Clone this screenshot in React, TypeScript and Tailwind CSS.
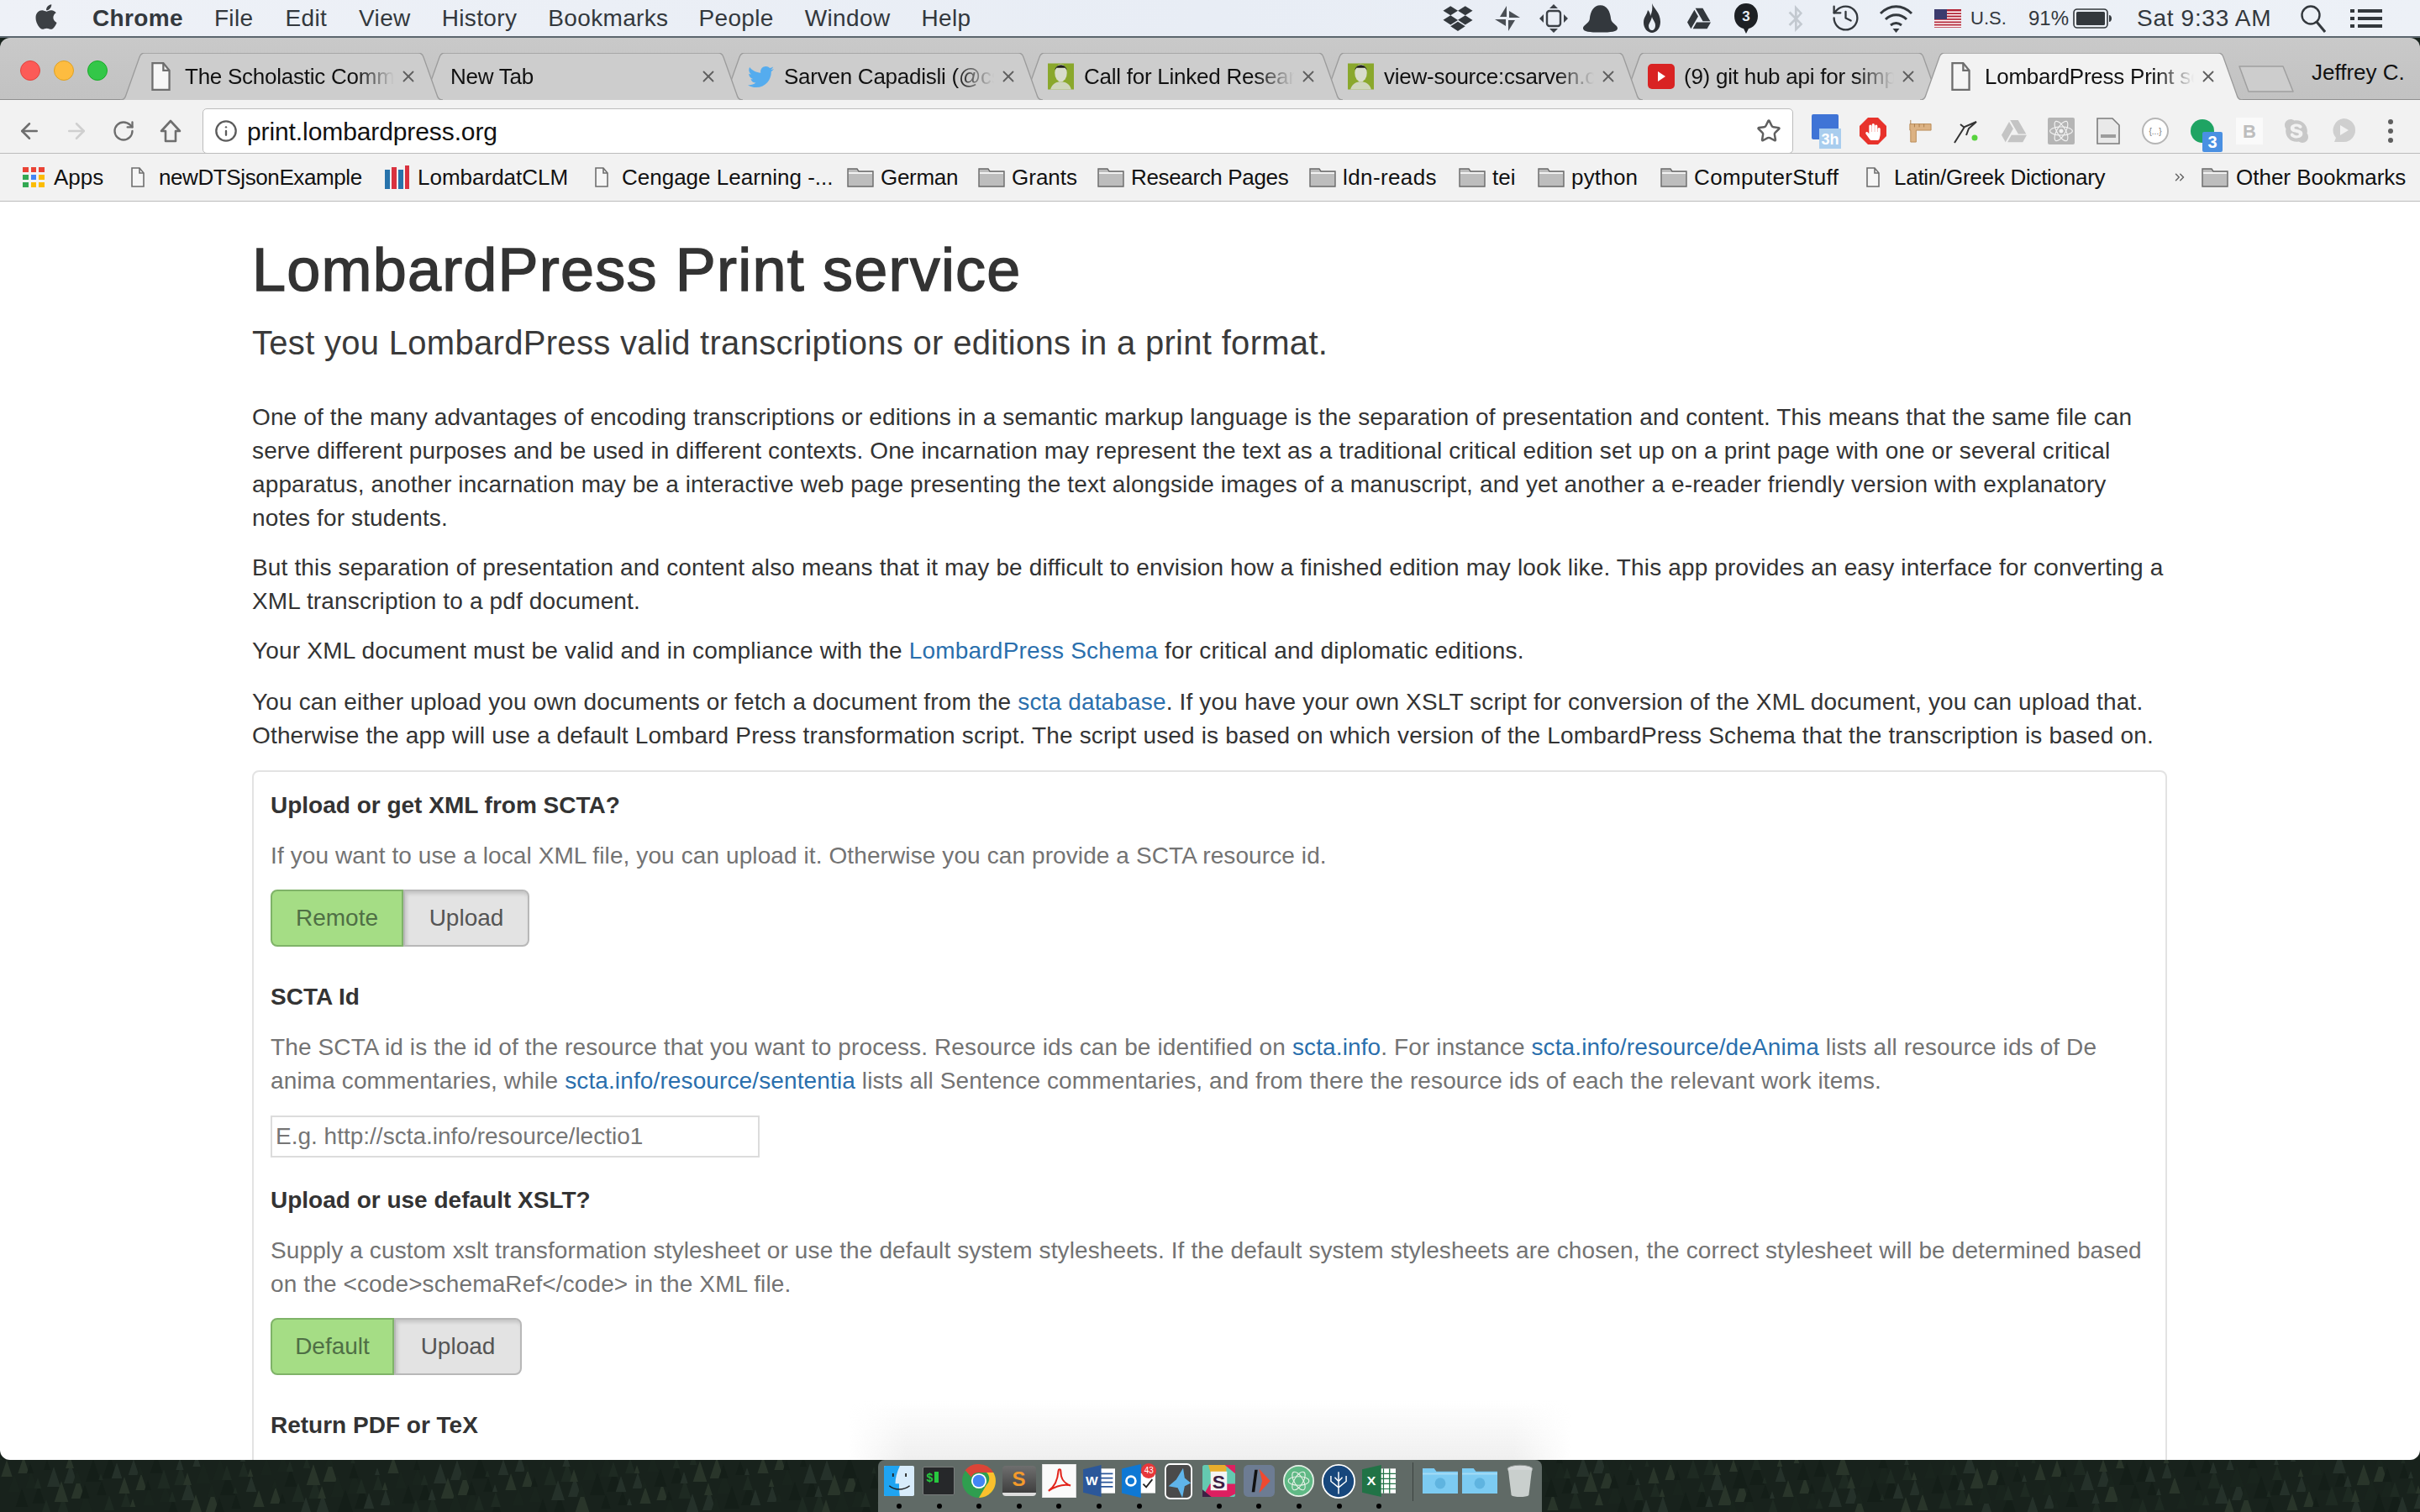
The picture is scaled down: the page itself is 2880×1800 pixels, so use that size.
import { ArrowLeft, ArrowRight, RotateCw, Info, Star, X, ChevronsRight, History } from "lucide-react";
import { FaApple, FaDropbox, FaGoogleDrive, FaBluetoothB, FaTwitter, FaReact, FaSkype, FaHandPaper } from "react-icons/fa";

const DocIcon = ({ className = "w-[23px] h-[36px]" }: { className?: string }) => (
    <svg viewBox="0 0 16 24" className={className} fill="none" stroke="#6e6e6e" strokeWidth="1.6">
        <path d="M1 1h9l5 6v16H1z" fill="#f6f6f6" />
        <path d="M10 1v6h5" />
    </svg>
);

const Folder = () => (
    <svg viewBox="0 0 32 24" className="w-[32px] h-[24px] shrink-0">
        <path d="M1 23V2h11l2 3h17v18z" fill="#bdbdbd" stroke="#6a6a6a" strokeWidth="1.4" />
        <path d="M2 7h28" stroke="#f2f2f2" strokeWidth="2" />
    </svg>
);

const Avatar = () => (
    <svg viewBox="0 0 30 30" className="w-[31px] h-[32px] shrink-0">
        <rect width="30" height="30" fill="#8aa82c" />
        <ellipse cx="15" cy="11" rx="7" ry="10" fill="#d8dccb" />
        <path d="M8 8c1-8 13-8 14 0l-2-3H10z" fill="#1e1e1a" />
        <path d="M3 30c2-7 7-9 12-9s10 2 12 9z" fill="#cfd6bd" />
    </svg>
);

const tabs = [
    { title: "The Scholastic Comm", icon: "doc", wrap: "relative w-[384px] h-[56px] mr-[-27px] shrink-0 z-[7]" },
    { title: "New Tab", icon: "none", wrap: "relative w-[384px] h-[56px] mr-[-27px] shrink-0 z-[6]" },
    { title: "Sarven Capadisli (@csarven)", icon: "twitter", wrap: "relative w-[384px] h-[56px] mr-[-27px] shrink-0 z-[5]" },
    { title: "Call for Linked Research", icon: "avatar", wrap: "relative w-[384px] h-[56px] mr-[-27px] shrink-0 z-[4]" },
    { title: "view-source:csarven.ca", icon: "avatar", wrap: "relative w-[384px] h-[56px] mr-[-27px] shrink-0 z-[3]" },
    { title: "(9) git hub api for simple", icon: "youtube", wrap: "relative w-[384px] h-[56px] mr-[-27px] shrink-0 z-[2]" },
    { title: "LombardPress Print service", icon: "doc", active: true, wrap: "relative w-[384px] h-[56px] mr-[-27px] shrink-0 z-[8]" },
];

const TabIcon = ({ icon }: { icon: string }) => {
    if (icon === "doc") return <div className="w-[44px] pl-[4px] shrink-0"><DocIcon /></div>;
    if (icon === "twitter") return <div className="w-[43px] shrink-0"><FaTwitter className="w-[31px] h-[31px] text-[#55acee]" /></div>;
    if (icon === "avatar") return <div className="w-[43px] shrink-0"><Avatar /></div>;
    if (icon === "youtube")
        return (
            <div className="w-[43px] shrink-0">
                <svg viewBox="0 0 32 32" className="w-[32px] h-[32px]">
                    <rect y="1" width="32" height="30" rx="5" fill="#d92323" />
                    <path d="M12 10l9 6-9 6z" fill="#fff" />
                </svg>
            </div>
        );
    return <div className="w-[3px] shrink-0" />;
};

const Tab = ({ tab }: { tab: (typeof tabs)[number] }) => (
    <div className={tab.wrap}>
        <svg viewBox="0 0 384 56" className="absolute inset-0 w-full h-full">
            <path
                d="M0 56C4 56 6 54 7 50L23 5C24 2 26 0 29 0H355C358 0 360 2 361 5L377 50C378 54 380 56 384 56"
                fill={tab.active ? "#f2f2f2" : "#cdcdcd"}
                stroke="#9b9b9b"
                strokeWidth="1.3"
            />
        </svg>
        <div className="relative flex items-center h-full pl-[33px] pr-[30px]">
            <TabIcon icon={tab.icon} />
            <div className="flex-1 min-w-0 overflow-hidden whitespace-nowrap text-[26px] tracking-[-0.25px] leading-[56px] text-[#111] [mask-image:linear-gradient(to_right,#000_82%,transparent_100%)]">
                {tab.title}
            </div>
            <X className="w-[22px] h-[22px] ml-[6px] text-[#5f5f5f] shrink-0" strokeWidth={2} />
        </div>
    </div>
);

const bookmarks = [
    { label: "newDTSjsonExample", kind: "doc", wrap: "flex items-center gap-[17px] w-[301px] shrink-0 tracking-[-0.4px]" },
    { label: "LombardatCLM", kind: "iiif", wrap: "flex items-center gap-[9px] w-[251px] shrink-0" },
    { label: "Cengage Learning -...", kind: "doc", wrap: "flex items-center gap-[16px] w-[300px] shrink-0" },
    { label: "German", kind: "folder", wrap: "flex items-center gap-[8px] w-[156px] shrink-0 tracking-[-0.3px]" },
    { label: "Grants", kind: "folder", wrap: "flex items-center gap-[8px] w-[142px] shrink-0" },
    { label: "Research Pages", kind: "folder", wrap: "flex items-center gap-[8px] w-[252px] shrink-0 tracking-[-0.35px]" },
    { label: "ldn-reads", kind: "folder", wrap: "flex items-center gap-[8px] w-[178px] shrink-0 tracking-[0.4px]" },
    { label: "tei", kind: "folder", wrap: "flex items-center gap-[8px] w-[94px] shrink-0" },
    { label: "python", kind: "folder", wrap: "flex items-center gap-[8px] w-[146px] shrink-0 tracking-[0.2px]" },
    { label: "ComputerStuff", kind: "folder", wrap: "flex items-center gap-[8px] w-[245px] shrink-0 tracking-[0.4px]" },
    { label: "Latin/Greek Dictionary", kind: "doc", wrap: "flex items-center gap-[17px] w-[364px] shrink-0 tracking-[-0.27px]" },
];

const MenuBar = () => (
    <div className="h-[45px] flex items-center shrink-0 bg-gradient-to-r from-[#eef1f7] via-[#e8edf5] to-[#edf1f7] border-b-2 border-[#5c666e] text-[28px] text-[#33383d]">
        <FaApple className="w-[30px] h-[34px] ml-[40px] mr-[40px] mb-[4px] text-[#3c4044]" />
        <div className="flex tracking-[0.35px] whitespace-nowrap">
            <span className="font-bold mr-[37px]">Chrome</span>
            <span className="mr-[38px]">File</span>
            <span className="mr-[38px]">Edit</span>
            <span className="mr-[37px]">View</span>
            <span className="mr-[37px]">History</span>
            <span className="mr-[36px]">Bookmarks</span>
            <span className="mr-[37px]">People</span>
            <span className="mr-[37px]">Window</span>
            <span>Help</span>
        </div>
        <div className="flex-1" />
        <FaDropbox className="w-[36px] h-[34px] text-[#33383d] mr-[25px]" />
        <svg viewBox="0 0 32 32" className="w-[32px] h-[32px] mr-[22px]" fill="#4a4f55">
            <path d="M15 1v13H7zM31 15H18V7zM17 31V18h8zM1 17h13v8z" />
        </svg>
        <svg viewBox="0 0 34 34" className="w-[34px] h-[34px] mr-[17px]" fill="#3c4147">
            <path d="M17 0l5 5H12zM17 34l-5-5h10zM0 17l5-5v10zM34 17l-5 5V12z" />
            <rect x="9" y="8" width="16" height="18" rx="3" fill="none" stroke="#3c4147" strokeWidth="2.4" />
        </svg>
        <svg viewBox="0 0 44 34" className="w-[43px] h-[34px] mr-[29px]" fill="#33383d">
            <path d="M22 1c8 0 12 7 13 17 1 5 8 7 8 11s-8 5-21 5-21-1-21-5 7-6 8-11C10 8 14 1 22 1z" />
        </svg>
        <svg viewBox="0 0 22 36" className="w-[22px] h-[36px] mr-[30px]" fill="#2f3338">
            <path d="M11 0c2 6 10 11 10 22 0 8-5 13-10 13S1 30 1 23C1 16 5 14 6 8c2 2 3 4 3 7 2-4 3-9 2-15z" />
            <path d="M11 16c1 4 4 6 4 10s-2 6-4 6-4-2-4-5 3-6 4-11z" fill="#e9eef5" />
        </svg>
        <FaGoogleDrive className="w-[30px] h-[28px] text-[#33383d] mr-[27px]" />
        <svg viewBox="0 0 28 36" className="w-[28px] h-[36px] mr-[35px]">
            <path d="M14 0c8 0 14 6 14 15s-6 14-11 15l-3 6-3-6C6 29 0 24 0 15S6 0 14 0z" fill="#1d2024" />
            <text x="14" y="21" textAnchor="middle" fontSize="17" fontWeight="700" fill="#e9eef5" fontFamily="Liberation Sans">3</text>
        </svg>
        <FaBluetoothB className="w-[20px] h-[34px] text-[#c3c9d0] mr-[31px]" />
        <History className="w-[37px] h-[37px] text-[#33383d] mr-[21px]" strokeWidth={1.5} />
        <svg viewBox="0 0 41 36" className="w-[41px] h-[36px] mr-[25px]" fill="none" stroke="#33383d" strokeWidth="3">
            <path d="M2 12c11-11 26-11 37 0M8 19c7-7 18-7 25 0M14 26c4-3 9-3 13 0" />
            <path d="M20.5 35l-4-5h8z" fill="#33383d" stroke="none" />
        </svg>
        <svg viewBox="0 0 32 22" className="w-[32px] h-[22px] mr-[11px]">
            <rect width="32" height="22" fill="#b22234" />
            <path d="M0 3.4h32M0 6.8h32M0 10.2h32M0 13.6h32M0 17h32M0 20.4h32" stroke="#fff" strokeWidth="1.6" />
            <rect width="15" height="12" fill="#3c3b6e" />
        </svg>
        <span className="w-[42px] text-[22px] mr-[27px] whitespace-nowrap">U.S.</span>
        <span className="w-[44px] text-[24px] mr-[9px] whitespace-nowrap">91%</span>
        <svg viewBox="0 0 46 24" className="w-[46px] h-[24px] mr-[30px]">
            <rect x="1" y="1" width="40" height="22" rx="4" fill="none" stroke="#33383d" strokeWidth="1.6" />
            <rect x="4" y="4" width="34" height="16" rx="1.5" fill="#33383d" />
            <path d="M43 8c2 0 3 2 3 4s-1 4-3 4z" fill="#33383d" />
        </svg>
        <span className="w-[158px] mr-[37px] tracking-[0.7px] whitespace-nowrap">Sat 9:33 AM</span>
        <svg viewBox="0 0 30 34" className="w-[30px] h-[34px] mr-[29px]" fill="none" stroke="#33383d" strokeWidth="2.4">
            <circle cx="12" cy="13" r="10.5" />
            <path d="M19 21l10 12" strokeWidth="3" />
        </svg>
        <svg viewBox="0 0 38 22" className="w-[38px] h-[22px] mr-[45px]" fill="#33383d">
            <path d="M0 0h5v4H0zM9 0h29v4H9zM0 9h5v4H0zM9 9h29v4H9zM0 18h5v4H0zM9 18h29v4H9z" />
        </svg>
    </div>
);

const TabStrip = () => (
    <div className="h-[74px] flex shrink-0 bg-gradient-to-b from-[#c9c9c9] to-[#c2c2c2] border-b border-[#8f8f8f] rounded-t-[12px]">
        <div className="flex gap-[16px] ml-[24px] mt-[27px] mr-[15px] shrink-0">
            <div className="w-[24px] h-[24px] rounded-full bg-[#fc5b57] border border-[#e0443e]" />
            <div className="w-[24px] h-[24px] rounded-full bg-[#fdbc40] border border-[#dea123]" />
            <div className="w-[24px] h-[24px] rounded-full bg-[#33c748] border border-[#1aab29]" />
        </div>
        <div className="flex mt-[18px]">
            {tabs.map((tab) => (
                <Tab key={tab.title} tab={tab} />
            ))}
        </div>
        <svg viewBox="0 0 66 32" className="w-[66px] h-[32px] mt-[33px] ml-[22px] shrink-0">
            <path d="M1 1h52l12 30H12z" fill="#cdcdcd" stroke="#a0a0a0" strokeWidth="1.5" strokeLinejoin="round" />
        </svg>
        <div className="ml-[21px] mt-[22px] text-[26px] leading-[38px] text-[#111] whitespace-nowrap">Jeffrey C.</div>
    </div>
);

const Extensions = () => (
    <div className="flex ml-[11px] shrink-0">
        <div className="w-[56px] h-[54px] flex items-center justify-center">
            <svg viewBox="0 0 40 42" className="w-[40px] h-[42px]">
                <rect x="3" y="1" width="32" height="30" rx="2" fill="#3f74d6" />
                <rect x="12" y="18" width="26" height="24" fill="#a9cdee" />
                <text x="25" y="37" textAnchor="middle" fontSize="18" fill="#fff" fontWeight="700" fontFamily="Liberation Sans">3h</text>
            </svg>
        </div>
        <div className="relative w-[56px] h-[54px] flex items-center justify-center">
            <svg viewBox="0 0 32 32" className="w-[32px] h-[32px]">
                <path d="M10 0h12l10 10v12L22 32H10L0 22V10z" fill="#e8322b" />
            </svg>
            <FaHandPaper className="absolute left-[19px] top-[18px] w-[18px] h-[20px] text-white" />
        </div>
        <div className="w-[56px] h-[54px] flex items-center justify-center">
            <svg viewBox="0 0 30 32" className="w-[28px] h-[30px]">
                <path d="M2 7h27v8H10v15H3V15H2z" fill="#dcb283" stroke="#b98a55" />
                <path d="M3 2v5M8 7v4M14 7v4M20 7v4" stroke="#a87b48" />
            </svg>
        </div>
        <div className="w-[56px] h-[54px] flex items-center justify-center">
            <svg viewBox="0 0 32 32" className="w-[32px] h-[32px]" fill="none">
                <path d="M1 30L13 11l14-6-9 8-3 8M13 12L8 8" stroke="#333" strokeWidth="2" />
                <circle cx="25" cy="24" r="3.5" fill="#58d33e" />
            </svg>
        </div>
        <div className="w-[56px] h-[54px] flex items-center justify-center">
            <FaGoogleDrive className="w-[32px] h-[30px] text-[#c4c4c4]" />
        </div>
        <div className="w-[56px] h-[54px] flex items-center justify-center">
            <div className="w-[32px] h-[32px] bg-[#b5b5b5] rounded-[2px] flex items-center justify-center">
                <FaReact className="w-[28px] h-[28px] text-[#f2f2f2]" />
            </div>
        </div>
        <div className="w-[56px] h-[54px] flex items-center justify-center">
            <svg viewBox="0 0 28 32" className="w-[28px] h-[32px]">
                <path d="M1 1h18l8 8v22H1z" fill="#e9e9e9" stroke="#7c7c7c" strokeWidth="1.6" />
                <rect x="5" y="20" width="18" height="4" fill="#9c9c9c" />
            </svg>
        </div>
        <div className="w-[56px] h-[54px] flex items-center justify-center">
            <div className="w-[32px] h-[32px] rounded-full border-2 border-[#b5b5b5] bg-white flex items-center justify-center text-[10px] text-[#777]">
                {"{...}"}
            </div>
        </div>
        <div className="relative w-[56px] h-[54px]">
            <div className="w-[28px] h-[28px] ml-[14px] mt-[13px] rounded-full bg-[#1fa463]" />
            <div className="absolute left-[28px] top-[28px] w-[24px] h-[24px] rounded-[2px] bg-[#4a90e2] text-white text-[20px] leading-[24px] font-bold text-center">3</div>
        </div>
        <div className="w-[56px] h-[54px] flex items-center justify-center">
            <div className="w-[32px] h-[32px] bg-[#fafafa] flex items-center justify-center text-[22px] font-bold text-[#bdbdbd]">B</div>
        </div>
        <div className="w-[56px] h-[54px] flex items-center justify-center">
            <FaSkype className="w-[32px] h-[32px] text-[#c8c8c8]" />
        </div>
        <div className="w-[56px] h-[54px] flex items-center justify-center">
            <svg viewBox="0 0 30 32" className="w-[30px] h-[32px]">
                <path d="M15 1a14 14 0 110 28H4l2-5A14 14 0 0115 1z" fill="#cfcfcf" />
                <path d="M11 9l10 6-10 6z" fill="#f2f2f2" />
            </svg>
        </div>
        <div className="w-[56px] h-[54px] flex flex-col items-center justify-center gap-[5px]">
            <div className="w-[6px] h-[6px] rounded-full bg-[#5f5f5f]" />
            <div className="w-[6px] h-[6px] rounded-full bg-[#5f5f5f]" />
            <div className="w-[6px] h-[6px] rounded-full bg-[#5f5f5f]" />
        </div>
    </div>
);

const Toolbar = () => (
    <div className="h-[63px] flex items-start pt-[10px] pl-[7px] shrink-0 bg-[#f2f2f2]">
        <div className="w-[56px] h-[54px] flex items-center justify-center"><ArrowLeft className="w-[30px] h-[30px] text-[#6e6e6e]" strokeWidth={2} /></div>
        <div className="w-[56px] h-[54px] flex items-center justify-center"><ArrowRight className="w-[30px] h-[30px] text-[#cfcfcf]" strokeWidth={2} /></div>
        <div className="w-[56px] h-[54px] flex items-center justify-center"><RotateCw className="w-[28px] h-[28px] text-[#6e6e6e]" strokeWidth={2} /></div>
        <div className="w-[56px] h-[54px] flex items-center justify-center">
            <svg viewBox="0 0 26 28" className="w-[26px] h-[28px]" fill="none" stroke="#6e6e6e" strokeWidth="2.6" strokeLinejoin="round">
                <path d="M13 2l11 12h-5v12H7V14H2z" />
            </svg>
        </div>
        <div className="ml-[10px] w-[1893px] h-[54px] bg-white border border-[#bcbcbc] rounded-[5px] flex items-center pl-[13px] pr-[13px] shrink-0">
            <Info className="w-[28px] h-[28px] text-[#5c5c5c] shrink-0" strokeWidth={2} />
            <span className="ml-[11px] text-[30px] tracking-[-0.1px] text-[#111]">print.lombardpress.org</span>
            <div className="flex-1" />
            <Star className="w-[30px] h-[30px] text-[#5f5f5f]" strokeWidth={2} />
        </div>
        <Extensions />
    </div>
);

const BookmarkIcon = ({ kind }: { kind: string }) => {
    if (kind === "doc") return <DocIcon className="w-[16px] h-[24px] shrink-0" />;
    if (kind === "folder") return <Folder />;
    return (
        <svg viewBox="0 0 31 28" className="w-[31px] h-[28px] shrink-0">
            <path d="M1 5h6v23H1z" fill="#2873ab" />
            <path d="M9 2h6v26H9z" fill="#d9323f" />
            <path d="M17 5h6v23h-6z" fill="#2873ab" />
            <path d="M25 0h5v28h-5z" fill="#d9323f" />
        </svg>
    );
};

const BookmarksBar = () => (
    <div className="h-[58px] flex items-center pl-[27px] shrink-0 bg-[#f2f2f2] border-t border-[#bcbcbc] border-b text-[26px] text-[#111] whitespace-nowrap">
        <div className="flex items-center gap-[11px] w-[129px] shrink-0">
            <div className="grid grid-cols-3 gap-[3px] w-[26px] shrink-0">
                <div className="h-[6px] bg-[#ea4335]" />
                <div className="h-[6px] bg-[#ea4335]" />
                <div className="h-[6px] bg-[#ea4335]" />
                <div className="h-[6px] bg-[#34a853]" />
                <div className="h-[6px] bg-[#4285f4]" />
                <div className="h-[6px] bg-[#fbbc05]" />
                <div className="h-[6px] bg-[#34a853]" />
                <div className="h-[6px] bg-[#fbbc05]" />
                <div className="h-[6px] bg-[#fbbc05]" />
            </div>
            <span>Apps</span>
        </div>
        {bookmarks.map((b) => (
            <div key={b.label} className={b.wrap}>
                <BookmarkIcon kind={b.kind} />
                <span>{b.label}</span>
            </div>
        ))}
        <ChevronsRight className="w-[18px] h-[20px] text-[#666] mr-[17px] shrink-0" strokeWidth={2} />
        <div className="flex items-center gap-[9px] shrink-0">
            <Folder />
            <span>Other Bookmarks</span>
        </div>
    </div>
);

const Link = ({ children }: { children: React.ReactNode }) => <a className="text-[#2a6fad]">{children}</a>;

const Toggle = ({ on, off, onClass, offClass }: { on: string; off: string; onClass: string; offClass: string }) => (
    <div className="flex h-[68px] mb-[40px] text-[28px]">
        <div className={onClass}>{on}</div>
        <div className={offClass}>{off}</div>
    </div>
);

const Page = () => (
    <div className="flex-1 min-h-0 overflow-hidden bg-white rounded-b-[12px] pl-[300px] w-full text-[28px] leading-[40px] text-[#333]">
        <div className="w-[2279px]">
            <h1 className="text-[72px] leading-[80px] mt-[41px] tracking-[1.2px] [-webkit-text-stroke:1.4px_#333]">LombardPress Print service</h1>
            <p className="text-[40px] tracking-[0.3px] leading-[60px] mt-[17px] mb-[39px] text-[#3a3a3a]">Test you LombardPress valid transcriptions or editions in a print format.</p>
            <p className="mb-[19px] whitespace-nowrap tracking-[0.13px]">
                One of the many advantages of encoding transcriptions or editions in a semantic markup language is the separation of presentation and content. This means that the same file can<br />
                serve different purposes and be used in different contexts. One incarnation may represent the text as a traditional critical edition set up on a print page with one or several critical<br />
                apparatus, another incarnation may be a interactive web page presenting the text alongside images of a manuscript, and yet another a e-reader friendly version with explanatory<br />
                notes for students.
            </p>
            <p className="mb-[19px] whitespace-nowrap tracking-[0.15px]">
                But this separation of presentation and content also means that it may be difficult to envision how a finished edition may look like. This app provides an easy interface for converting a<br />
                XML transcription to a pdf document.
            </p>
            <p className="mb-[21px] whitespace-nowrap tracking-[0.2px]">
                Your XML document must be valid and in compliance with the <Link>LombardPress Schema</Link> for critical and diplomatic editions.
            </p>
            <p className="mb-[21px] whitespace-nowrap tracking-[0.16px]">
                You can either upload you own documents or fetch a document from the <Link>scta database</Link>. If you have your own XSLT script for conversion of the XML document, you can upload that.<br />
                Otherwise the app will use a default Lombard Press transformation script. The script used is based on which version of the LombardPress Schema that the transcription is based on.
            </p>
            <div className="border-2 border-[#e3e3e3] rounded-[8px] px-[20px] pt-[20px] pb-[120px] whitespace-nowrap">
                <h2 className="font-bold leading-[40px] mb-[20px]">Upload or get XML from SCTA?</h2>
                <p className="text-[#737373] mb-[20px] tracking-[0.1px]">If you want to use a local XML file, you can upload it. Otherwise you can provide a SCTA resource id.</p>
                <Toggle
                    on="Remote"
                    off="Upload"
                    onClass="w-[158px] flex items-center justify-center bg-[#a5dd85] border-2 border-[#7fb368] rounded-l-[8px] text-[#4f6f45]"
                    offClass="w-[150px] flex items-center justify-center bg-[#e3e3e3] border-2 border-[#b8b8b8] rounded-r-[8px] text-[#555] shadow-[inset_2px_3px_4px_rgba(0,0,0,0.14)]"
                />
                <h2 className="font-bold leading-[40px] mb-[20px]">SCTA Id</h2>
                <p className="text-[#737373] mb-[21px] tracking-[0.12px]">
                    The SCTA id is the id of the resource that you want to process. Resource ids can be identified on <Link>scta.info</Link>. For instance <Link>scta.info/resource/deAnima</Link> lists all resource ids of De<br />
                    anima commentaries, while <Link>scta.info/resource/sententia</Link> lists all Sentence commentaries, and from there the resource ids of each the relevant work items.
                </p>
                <input
                    readOnly
                    placeholder="E.g. http://scta.info/resource/lectio1"
                    className="block w-[582px] h-[50px] border-2 border-[#dcdcdc] px-[4px] placeholder:text-[#757575] mb-[31px]"
                />
                <h2 className="font-bold leading-[40px] mb-[20px]">Upload or use default XSLT?</h2>
                <p className="text-[#737373] mb-[20px] tracking-[0.12px]">
                    Supply a custom xslt transformation stylesheet or use the default system stylesheets. If the default system stylesheets are chosen, the correct stylesheet will be determined based<br />
                    on the {"<code>schemaRef</code>"} in the XML file.
                </p>
                <Toggle
                    on="Default"
                    off="Upload"
                    onClass="w-[147px] flex items-center justify-center bg-[#a5dd85] border-2 border-[#7fb368] rounded-l-[8px] text-[#4f6f45]"
                    offClass="w-[152px] flex items-center justify-center bg-[#e3e3e3] border-2 border-[#b8b8b8] rounded-r-[8px] text-[#555] shadow-[inset_2px_3px_4px_rgba(0,0,0,0.14)]"
                />
                <h2 className="font-bold leading-[40px]">Return PDF or TeX</h2>
            </div>
        </div>
    </div>
);

const Trees = () => {
    const trees = Array.from({ length: 700 }, (_, i) => {
        const x = (i * 197) % 2880;
        const y = ((i * 37) % 56) - 6;
        const h = 8 + ((i * 13) % 20);
        const fill = ["#1e2a22", "#19241d", "#25312a", "#141e18", "#29352a"][i % 5];
        return <path key={i} d={`M${x} ${y}l${h / 3} ${h}h-${(h * 2) / 3}z`} fill={fill} />;
    });
    return (
        <svg viewBox="0 0 2880 64" className="absolute left-0 bottom-0 w-[2880px] h-[64px] bg-[#18221c]">
            {trees}
        </svg>
    );
};

const dockItems = [
    <svg key="finder" viewBox="0 0 40 44" className="w-[36px] h-[36px]" preserveAspectRatio="none">
        <rect width="40" height="44" rx="2" fill="#d8ecfb" />
        <path d="M0 2a2 2 0 012-2h19c-4 10-6 18-6 26h5c0 6 0 12 1 18H2a2 2 0 01-2-2z" fill="#1fa4f2" />
        <path d="M7 29c7 7 19 7 27 0" stroke="#222" strokeWidth="1.6" fill="none" />
        <path d="M12 11v5M29 11v5" stroke="#222" strokeWidth="2" />
    </svg>,
    <div key="term" className="w-[38px] h-[34px] bg-[#26282a] border border-[#7a7d7c] rounded-[2px] flex pl-[3px] text-[#27c93f] text-[14px] font-bold leading-[24px]">$<span className="ml-[2px] mt-[5px] w-[5px] h-[13px] bg-[#27c93f]" /></div>,
    <svg key="chrome" viewBox="0 0 44 44" className="w-[40px] h-[40px]">
        <circle cx="22" cy="22" r="22" fill="#2f9e4f" />
        <path d="M22 0a22 22 0 0119 11H22a11 11 0 00-10 6L4 8A22 22 0 0122 0z" fill="#db4437" />
        <path d="M41 11a22 22 0 01-19 33l10-17a11 11 0 000-16z" fill="#fbc02d" />
        <circle cx="22" cy="22" r="10" fill="#fff" />
        <circle cx="22" cy="22" r="8" fill="#4285f4" />
    </svg>,
    <div key="sublime" className="w-[40px] h-[36px] bg-gradient-to-b from-[#6f6f6f] to-[#3f3f3f] rounded-[4px] border-b-4 border-[#ddd] flex items-center justify-center text-[#f39a2b] font-bold text-[24px] leading-none">S</div>,
    <svg key="acrobat" viewBox="0 0 44 44" className="w-[41px] h-[40px]">
        <rect width="44" height="44" fill="#fafafa" stroke="#ddd" />
        <path d="M8 35c8-5 12-14 13-26 0-3 3-3 3 0 0 10 5 17 13 19-8-2-18 0-29 7z" fill="none" stroke="#e2231a" strokeWidth="2.2" />
    </svg>,
    <svg key="word" viewBox="0 0 44 44" className="w-[40px] h-[38px]">
        <rect x="20" y="5" width="24" height="34" fill="#fff" />
        <path d="M24 12h17M24 18h17M24 24h17M24 30h17" stroke="#2b579a" strokeWidth="2" />
        <path d="M0 6l25-6v44L0 38z" fill="#2b579a" />
        <text x="12" y="28" textAnchor="middle" fontSize="18" fontWeight="700" fill="#fff" fontFamily="Liberation Sans">W</text>
    </svg>,
    <div key="outlook" className="relative w-[40px] h-[40px]">
        <svg viewBox="0 0 44 44" className="w-[40px] h-[40px]">
            <rect x="20" y="12" width="24" height="26" fill="#fff" />
            <path d="M28 26l4 4 8-10" stroke="#222" strokeWidth="2" fill="none" />
            <path d="M0 6l25-6v44L0 38z" fill="#0f78d4" />
            <circle cx="12" cy="22" r="6" fill="none" stroke="#fff" strokeWidth="3" />
        </svg>
        <div className="absolute -top-[1px] -right-[1px] w-[18px] h-[18px] rounded-full bg-[#e8373a] text-white text-[10px] leading-[18px] text-center">43</div>
    </div>,
    <svg key="scriv" viewBox="0 0 36 44" className="w-[33px] h-[43px]" preserveAspectRatio="none">
        <rect x="1" y="1" width="34" height="42" rx="6" fill="#4a4a4a" stroke="#fff" strokeWidth="2" />
        <path d="M24 6l2 12 8 6-8 4-3 14-6-12-12-2 10-8z" fill="#5fb4ea" />
    </svg>,
    <svg key="slack" viewBox="0 0 44 44" className="w-[39px] h-[38px]" preserveAspectRatio="none">
        <rect width="44" height="44" rx="3" fill="#64c9b0" />
        <path d="M8 0h24v44H20z" fill="#e8ae2c" />
        <path d="M30 0h14v12zM0 44l10-18h34v14l-8 4z" fill="#dd1f60" />
        <path d="M0 34l12 10H0z" fill="#3e1e44" />
        <rect x="11" y="9" width="22" height="26" fill="#f4f4f4" />
        <text x="22" y="32" textAnchor="middle" fontSize="26" fontWeight="700" fill="#3e1e44" fontFamily="Liberation Sans">S</text>
    </svg>,
    <svg key="deck" viewBox="0 0 42 40" className="w-[37px] h-[38px]" preserveAspectRatio="none">
        <rect width="42" height="40" rx="6" fill="#6d7c93" />
        <path d="M15 6h4l-4 28h-4z" fill="#111" />
        <path d="M21 5l15 15-15 15 4-15z" fill="#f0492f" />
    </svg>,
    <svg key="atom" viewBox="0 0 42 44" className="w-[37px] h-[38px]" preserveAspectRatio="none">
        <ellipse cx="21" cy="22" rx="20" ry="21" fill="#5fb985" stroke="#e4efe6" strokeWidth="2" />
        <g fill="none" stroke="#e8f2e8" strokeWidth="1.2">
            <ellipse cx="21" cy="22" rx="14" ry="6" />
            <ellipse cx="21" cy="22" rx="14" ry="6" transform="rotate(60 21 22)" />
            <ellipse cx="21" cy="22" rx="14" ry="6" transform="rotate(120 21 22)" />
        </g>
    </svg>,
    <svg key="tree" viewBox="0 0 44 44" className="w-[40px] h-[41px]" preserveAspectRatio="none">
        <circle cx="22" cy="22" r="21" fill="#17477c" stroke="#fff" strokeWidth="2" />
        <path d="M22 38V10M22 30l-10-8v-7M22 30l10-8v-7M22 22l-5-5M22 22l5-5" stroke="#fff" strokeWidth="1.6" fill="none" />
    </svg>,
    <svg key="excel" viewBox="0 0 44 44" className="w-[40px] h-[38px]" preserveAspectRatio="none">
        <rect x="20" y="5" width="24" height="34" fill="#fff" />
        <path d="M28 5v34M36 5v34M22 12h22M22 19h22M22 26h22M22 33h22" stroke="#217346" strokeWidth="1.4" />
        <path d="M0 6l25-6v44L0 38z" fill="#217346" />
        <text x="12" y="28" textAnchor="middle" fontSize="18" fontWeight="700" fill="#fff" fontFamily="Liberation Sans">X</text>
    </svg>,
];

const DockFolder = () => (
    <svg viewBox="0 0 46 34" className="w-[42px] h-[32px]" preserveAspectRatio="none">
        <path d="M0 33V1h15l3 4h28v28z" fill="#7ccbf2" />
        <path d="M0 8h46" stroke="#a4dcf6" strokeWidth="2" />
        <circle cx="23" cy="20" r="7" fill="#5fb4e0" />
    </svg>
);

const Dock = () => (
    <div className="absolute left-[1045px] bottom-0 w-[790px] h-[62px] bg-[#606a66] rounded-t-[8px] flex pt-[3px] pl-[1px]">
        {dockItems.map((item, i) => (
            <div key={i} className="relative w-[47.6px] h-[44px] flex items-center justify-center shrink-0">
                {item}
                {i !== 7 && <div className="absolute -bottom-[11px] left-[21px] w-[6px] h-[6px] rounded-full bg-black" />}
            </div>
        ))}
        <div className="w-[1px] h-[46px] bg-[#3c4340] ml-[16px] mr-[8px] shrink-0" />
        <div className="w-[47.6px] h-[44px] flex items-center justify-center shrink-0"><DockFolder /></div>
        <div className="w-[47.6px] h-[44px] flex items-center justify-center shrink-0"><DockFolder /></div>
        <div className="w-[47.6px] h-[44px] flex items-center justify-center shrink-0">
            <svg viewBox="0 0 34 42" className="w-[32px] h-[40px]">
                <ellipse cx="17" cy="6" rx="16" ry="5" fill="#d4d8d8" stroke="#8a8f8e" />
                <path d="M2 7l4 32c3 3 19 3 22 0l4-32z" fill="#c9cfcd" />
            </svg>
        </div>
    </div>
);

export default function App() {
    return (
        <div className="relative h-[1800px] w-[2880px] overflow-hidden bg-[#18221c] font-['Liberation_Sans',Arial,sans-serif]">
            <Trees />
            <div className="relative h-[1738px] flex flex-col">
                <MenuBar />
                <TabStrip />
                <Toolbar />
                <BookmarksBar />
                <Page />
                <div className="absolute left-[1010px] bottom-0 w-[860px] h-[70px] bg-gradient-to-b from-transparent to-[#efefef] pointer-events-none [mask-image:linear-gradient(to_right,transparent,#000_8%,#000_92%,transparent)]" />
            </div>
            <Dock />
        </div>
    );
}
